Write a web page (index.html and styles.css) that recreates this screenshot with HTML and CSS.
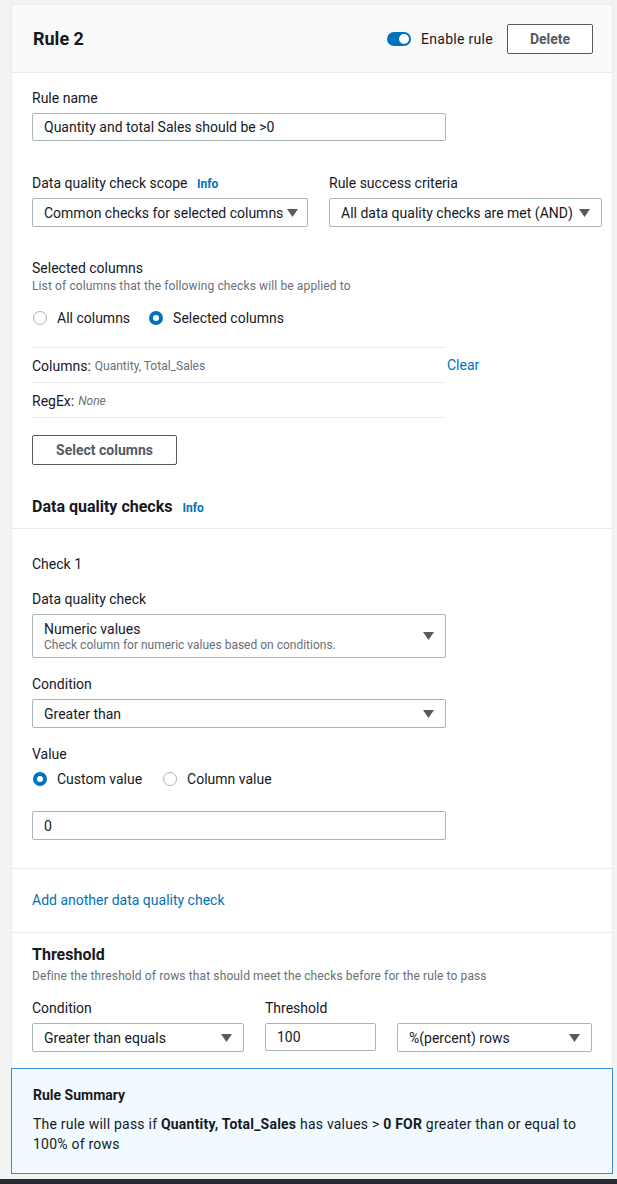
FILE: index.html
```html
<!DOCTYPE html>
<html lang="en">
<head>
<meta charset="utf-8">
<title>Rule 2</title>
<link rel="stylesheet" href="styles.css">
</head>
<body>
<div class="page">
  <div class="card">
    <div class="card-header">
      <h2 class="title">Rule 2</h2>
      <div class="header-actions">
        <span class="toggle"><span class="knob"></span></span>
        <span class="toggle-label">Enable rule</span>
        <button class="btn btn-delete">Delete</button>
      </div>
    </div>

    <div class="section sec-main">
      <div class="label">Rule name</div>
      <div class="field input w414">Quantity and total Sales should be &gt;0</div>

      <div class="scope-row">
        <div class="scope-col c1">
          <div class="label">Data quality check scope <span class="info">Info</span></div>
          <div class="field select">
            <span>Common checks for selected columns</span>
            <svg class="caret" width="11" height="8" viewBox="0 0 11 8"><path d="M0 0H11L5.5 8Z" fill="#545b64"/></svg>
          </div>
        </div>
        <div class="scope-col c2">
          <div class="label">Rule success criteria</div>
          <div class="field select">
            <span>All data quality checks are met (AND)</span>
            <svg class="caret" width="11" height="8" viewBox="0 0 11 8"><path d="M0 0H11L5.5 8Z" fill="#545b64"/></svg>
          </div>
        </div>
      </div>

      <div class="label sel-cols">Selected columns</div>
      <div class="desc">List of columns that the following checks will be applied to</div>
      <div class="radios r1">
        <span class="radio"><span class="dot"></span>All columns</span>
        <span class="radio"><span class="dot on"></span>Selected columns</span>
      </div>

      <div class="col-list">
        <div class="col-row">
          <div class="col-cell"><span class="k">Columns:</span> <span class="v">Quantity, Total_Sales</span></div>
          <a class="clear">Clear</a>
        </div>
        <div class="col-row">
          <div class="col-cell last"><span class="k">RegEx:</span> <span class="v it">None</span></div>
        </div>
      </div>

      <button class="btn btn-select">Select columns</button>

      <div class="sub-title">Data quality checks <span class="info">Info</span></div>
    </div>

    <div class="section sec-check">
      <div class="label">Check 1</div>
      <div class="label mt15">Data quality check</div>
      <div class="field select tall w414">
        <div class="opt">
          <div>Numeric values</div>
          <div class="opt-desc">Check column for numeric values based on conditions.</div>
        </div>
        <svg class="caret" width="11" height="8" viewBox="0 0 11 8"><path d="M0 0H11L5.5 8Z" fill="#545b64"/></svg>
      </div>
      <div class="label mt16">Condition</div>
      <div class="field select w414">
        <span>Greater than</span>
        <svg class="caret" width="11" height="8" viewBox="0 0 11 8"><path d="M0 0H11L5.5 8Z" fill="#545b64"/></svg>
      </div>
      <div class="label mt16">Value</div>
      <div class="radios r2">
        <span class="radio"><span class="dot on"></span>Custom value</span>
        <span class="radio"><span class="dot"></span>Column value</span>
      </div>
      <div class="field input value-input w414">0</div>
    </div>

    <div class="section sec-add">
      <a class="link">Add another data quality check</a>
    </div>

    <div class="section sec-threshold">
      <div class="sub-title">Threshold</div>
      <div class="desc">Define the threshold of rows that should meet the checks before for the rule to pass</div>
      <div class="th-grid">
        <div class="label">Condition</div>
        <div class="label">Threshold</div>
        <div></div>
        <div class="field select">
          <span>Greater than equals</span>
          <svg class="caret" width="11" height="8" viewBox="0 0 11 8"><path d="M0 0H11L5.5 8Z" fill="#545b64"/></svg>
        </div>
        <div class="field input">100</div>
        <div class="field select">
          <span>%(percent) rows</span>
          <svg class="caret" width="11" height="8" viewBox="0 0 11 8"><path d="M0 0H11L5.5 8Z" fill="#545b64"/></svg>
        </div>
      </div>
    </div>

    <div class="summary">
      <div class="summary-title">Rule Summary</div>
      <p class="summary-text">The rule will pass if <b>Quantity, Total_Sales</b> has values &gt; <b>0 FOR</b> greater than or equal to 100% of rows</p>
    </div>
  </div>
  <div class="footer-bar"></div>
</div>
</body>
</html>
```

FILE: styles.css
```css
* { box-sizing: border-box; }
html, body { margin: 0; padding: 0; }
body {
  background: #f2f3f3;
  font-family: Roboto, "Liberation Sans", sans-serif;
  font-size: 14px;
  line-height: 20px;
  color: #16191f;
  height: 1184px;
  overflow: hidden;
}
.page { padding-top: 4px; }
.card {
  margin-left: 11px;
  width: 602px;
  background: #fff;
  border: 1px solid #e9ebed;
  border-bottom: none;
}
.card-header {
  height: 68px;
  background: #fafafa;
  border-bottom: 1px solid #e9ebed;
  display: flex;
  align-items: center;
  justify-content: space-between;
  padding: 0 19px 0 21px;
}
.title {
  margin: 0;
  font-size: 18px;
  font-weight: 700;
  line-height: 22px;
}
.header-actions { display: flex; align-items: center; }
.toggle {
  width: 24px;
  height: 14px;
  border-radius: 7px;
  background: #0073bb;
  position: relative;
  display: inline-block;
}
.knob {
  position: absolute;
  right: 2px;
  top: 2px;
  width: 10px;
  height: 10px;
  border-radius: 50%;
  background: #fff;
}
.toggle-label { margin-left: 10px; margin-right: 14px; letter-spacing: 0.3px; }
.btn {
  font-family: inherit;
  font-size: 14px;
  font-weight: 700;
  color: #545b64;
  background: #fff;
  border: 1px solid #545b64;
  border-radius: 2px;
  padding: 0;
  display: flex;
  align-items: center;
  justify-content: center;
}
.btn-delete { width: 86px; height: 30px; }
.section { padding-left: 20px; border-bottom: 1px solid #e9ebed; }
.sec-main { padding-top: 15px; padding-bottom: 10px; }
.label { line-height: 20px; }
.info {
  color: #0073bb;
  font-size: 12px;
  font-weight: 700;
  margin-left: 6px;
  line-height: 1;
  display: inline-block;
  vertical-align: baseline;
}
.field {
  border: 1px solid #aab7b8;
  border-radius: 2px;
  background: #fff;
  height: 29px;
  display: flex;
  align-items: center;
  padding: 0 11px;
  margin-top: 5px;
}
.w414 { width: 414px; }
.input { height: 28px; }
.select { justify-content: space-between; white-space: nowrap; }
.caret { flex: none; margin-left: 4px; }
.scope-row { display: flex; gap: 21px; margin-top: 32px; }
.scope-col.c1 { width: 276px; }
.scope-col.c2 { width: 273px; }
.sel-cols { margin-top: 31px; }
.desc { font-size: 12px; line-height: 16px; color: #687078; letter-spacing: 0.12px; }
.radios { display: flex; height: 20px; align-items: center; }
.r1 { margin-top: 14px; gap: 18px; }
.r2 { gap: 20px; }
.radio { display: flex; align-items: center; }
.dot {
  width: 14px;
  height: 14px;
  border-radius: 50%;
  border: 1.5px solid #aab7b8;
  margin: 0 10px 0 1px;
  background: #fff;
}
.dot.on { border: 4px solid #0073bb; }
.col-list { margin-top: 19px; }
.col-row { display: flex; align-items: center; }
.col-cell {
  width: 414px;
  height: 35px;
  border-top: 1px solid #e9ebed;
  display: flex;
  align-items: center;
  padding-top: 1px;
}
.col-cell.last { height: 36px; border-bottom: 1px solid #e9ebed; }
.k { font-size: 14px; }
.v { font-size: 12px; color: #687078; margin-left: 4px; }
.it { font-style: italic; }
.clear { color: #0073bb; margin-left: 1px; font-size: 14px; }
.btn-select { width: 145px; height: 30px; margin-top: 17px; }
.sub-title { font-size: 16px; font-weight: 700; line-height: 22px; }
.sec-main .sub-title { margin-top: 31px; }
.sec-check { padding-top: 25px; padding-bottom: 28px; }
.mt15 { margin-top: 15px; }
.mt16 { margin-top: 16px; }
.value-input { margin-top: 22px; height: 29px; }
.tall { height: 44px; }
.opt { line-height: 18px; }
.opt-desc { font-size: 12px; line-height: 14px; color: #687078; }
.radios.r2 { margin-top: 5px; }
.sec-add { padding-top: 21px; padding-bottom: 22px; }
.link { color: #0073bb; display: block; line-height: 20px; }
.sec-threshold { padding-top: 11px; padding-bottom: 16px; border-bottom: none; }
.sec-threshold .desc { margin-top: 2px; }
.th-grid {
  display: grid;
  grid-template-columns: 212px 111px 195px;
  column-gap: 21px;
  margin-top: 14px;
}
.summary {
  margin: 0 -1px;
  background: #f1faff;
  border: 1px solid #3b8bd0;
  padding: 16px 20px 19px 21px;
}
.summary-title { font-weight: 700; line-height: 20px; }
.summary-text { margin: 9px 0 0; line-height: 20px; letter-spacing: 0.22px; }
.footer-bar { height: 5px; background: #272c33; margin-top: 5px; }
```
